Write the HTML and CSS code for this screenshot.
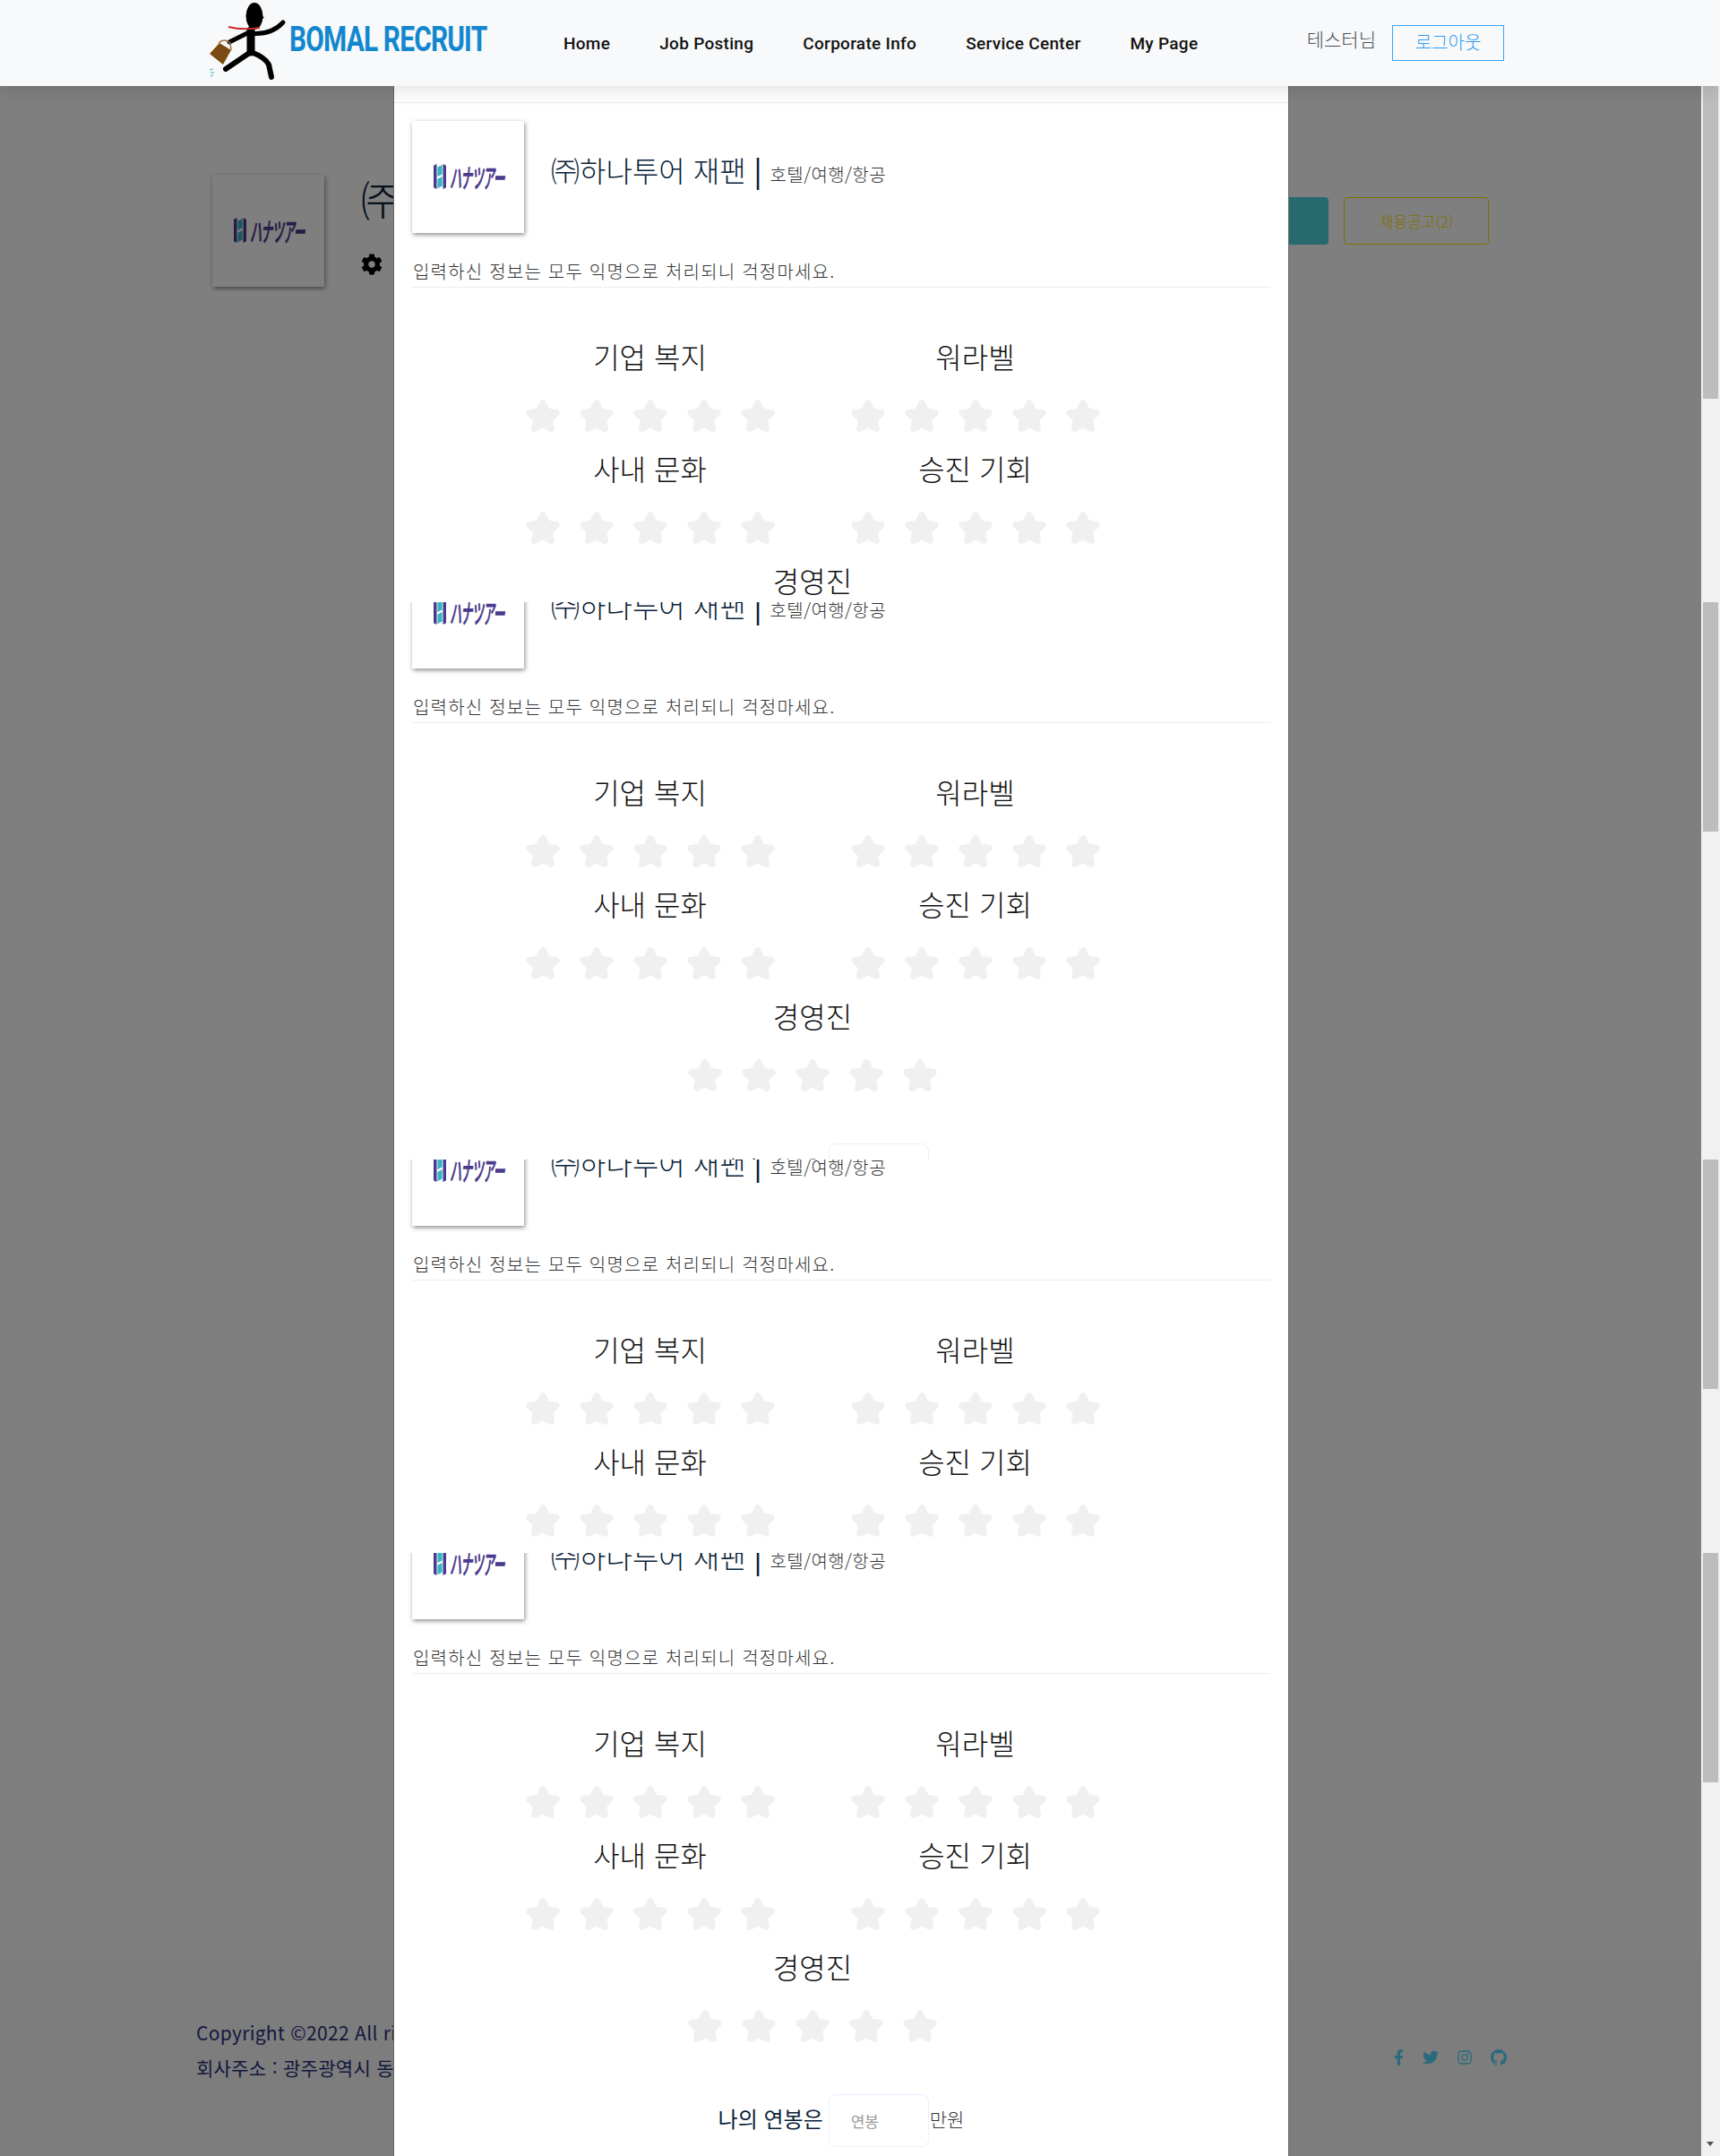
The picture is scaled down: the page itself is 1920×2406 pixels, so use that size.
FILE: index.html
```html
<!DOCTYPE html>
<html lang="ko">
<head>
    <meta charset="UTF-8">
    <meta name="viewport" content="width=device-width, initial-scale=1.0">
    <title>BOMAL RECRUIT</title>
    <link rel="stylesheet" href="styles.css">
</head>
<body>
<svg class="defs" width="0" height="0">
    <symbol id="star" viewBox="-24 -24 624 560"><path d="M259.3 17.8L194 150.2 47.9 171.5c-26.2 3.8-36.7 36.1-17.7 54.6l105.7 103-25 145.5c-4.5 26.3 23.2 46 46.4 33.7L288 439.6l130.7 68.7c23.2 12.2 50.9-7.4 46.4-33.7l-25-145.5 105.7-103c19-18.5 8.5-50.8-17.7-54.6L382 150.2 316.7 17.8c-11.7-23.6-45.6-23.9-57.4 0z" stroke="#f0f0f0" stroke-width="48" stroke-linejoin="round"/></symbol>
    <symbol id="stars" viewBox="0 0 280 36">
        <use href="#star" x="0" width="40" height="36"/>
        <use href="#star" x="60" width="40" height="36"/>
        <use href="#star" x="120" width="40" height="36"/>
        <use href="#star" x="180" width="40" height="36"/>
        <use href="#star" x="240" width="40" height="36"/>
    </symbol>
    <symbol id="hana" viewBox="0 0 16 32">
        <path d="M0 2l4-2v32l-4-2zM16 2l-4-2v32l4-2z" fill="#4b3a8c"/>
        <path d="M5 4l6-3v12l-6 3zM5 19l6-3v12l-6 3z" fill="#35b5c4"/>
    </symbol>
</svg>

<header class="topbar">
    <a class="brand" href="#">
        <svg class="brand-man" viewBox="0 0 104 96">
            <ellipse cx="64" cy="18" rx="9.5" ry="15" fill="#000"/>
            <path d="M72 17l3 3-3 1z" fill="#000"/>
            <path d="M60 34L60 58" stroke="#000" stroke-width="9" stroke-linecap="round" fill="none"/>
            <path d="M58 37Q82 40 96 25" stroke="#000" stroke-width="5" stroke-linecap="round" fill="none"/>
            <path d="M58 36L36 47" stroke="#000" stroke-width="5" stroke-linecap="round" fill="none"/>
            <path d="M60 58L32 77" stroke="#000" stroke-width="6" stroke-linecap="round" fill="none"/>
            <path d="M60 58Q76 64 80 72L83 86" stroke="#000" stroke-width="6" stroke-linecap="round" fill="none"/>
            <path d="M35 30Q50 34 70 31" stroke="#c62828" stroke-width="2" fill="none"/>
            <path d="M14 60L25 48 38 56 29 72z" fill="#7b4a12"/>
            <path d="M24 48Q30 42 37 48L38 56" stroke="#a5713a" stroke-width="1.5" fill="none"/>
            <path d="M14 78l4-1M15 81l4 0M15 85l3-1" stroke="#35b5c4" stroke-width="1" fill="none"/>
        </svg>
        <span class="brand-text">BOMAL RECRUIT</span>
    </a>
    <nav class="topnav">
        <a href="#">Home</a>
        <a href="#">Job Posting</a>
        <a href="#">Corporate Info</a>
        <a href="#">Service Center</a>
        <a href="#">My Page</a>
    </nav>
    <div class="user-box">
        <span class="user-name">테스터님</span>
        <a class="btn-logout" href="#">로그아웃</a>
    </div>
</header>

<div class="below">
    <div class="stage">
        <main class="page">
            <section class="company">
                <div class="logo-card">
                    <svg class="hana-icon"><use href="#hana"/></svg><span class="hana-text">ハナツアー</span>
                </div>
                <div class="company-info">
                    <h1 class="company-name">㈜하나투어 재팬</h1>
                    <svg class="gear" viewBox="0 0 512 512"><path d="M487.4 315.7l-42.6-24.6c4.3-23.2 4.3-47 0-70.2l42.6-24.6c4.9-2.8 7.1-8.6 5.5-14-11.1-35.6-30-67.8-54.7-94.6-3.8-4.1-10-5.1-14.8-2.3L380.8 110c-17.9-15.4-38.5-27.3-60.8-35.1V25.8c0-5.6-3.9-10.5-9.4-11.7-36.7-8.2-74.3-7.8-109.2 0-5.5 1.2-9.4 6.1-9.4 11.7V75c-22.2 7.9-42.8 19.8-60.8 35.1L88.7 85.5c-4.9-2.8-11-1.9-14.8 2.3-24.7 26.7-43.6 58.9-54.7 94.6-1.7 5.4.6 11.2 5.5 14L67.3 221c-4.3 23.2-4.3 47 0 70.2l-42.6 24.6c-4.9 2.8-7.1 8.6-5.5 14 11.1 35.6 30 67.8 54.7 94.6 3.8 4.1 10 5.1 14.8 2.3l42.6-24.6c17.9 15.4 38.5 27.3 60.8 35.1v49.2c0 5.6 3.9 10.5 9.4 11.7 36.7 8.2 74.3 7.8 109.2 0 5.5-1.2 9.4-6.1 9.4-11.7v-49.2c22.2-7.9 42.8-19.8 60.8-35.1l42.6 24.6c4.9 2.8 11 1.9 14.8-2.3 24.7-26.7 43.6-58.9 54.7-94.6 1.5-5.5-.7-11.3-5.6-14.1zM256 336c-44.1 0-80-35.9-80-80s35.9-80 80-80 80 35.9 80 80-35.9 80-80 80z"/></svg>
                </div>
                <div class="company-btns">
                    <a class="btn-teal" href="#">기업 리뷰</a>
                    <a class="btn-yellow" href="#">채용공고(2)</a>
                </div>
            </section>
            <footer class="footer">
                <div class="footer-text">
                    <p>Copyright ©2022 All rights reserved</p>
                    <p>회사주소 : 광주광역시 동구</p>
                </div>
                <div class="socials">
                    <svg class="social-f" viewBox="0 0 320 512"><path d="M279.14 288l14.22-92.66h-88.91v-60.13c0-25.35 12.42-50.06 52.24-50.06h40.42V6.26S260.43 0 225.36 0c-73.22 0-121.08 44.38-121.08 124.72v70.62H22.89V288h81.39v224h100.17V288z"/></svg>
                    <svg class="social-t" viewBox="0 0 512 512"><path d="M459.37 151.716c.325 4.548.325 9.097.325 13.645 0 138.72-105.583 298.558-298.558 298.558-59.452 0-114.68-17.219-161.137-47.106 8.447.974 16.568 1.299 25.34 1.299 49.055 0 94.213-16.568 130.274-44.832-46.132-.975-84.792-31.188-98.112-72.772 6.498.974 12.995 1.624 19.818 1.624 9.421 0 18.843-1.3 27.614-3.573-48.081-9.747-84.143-51.98-84.143-102.985v-1.299c13.969 7.797 30.214 12.67 47.431 13.319-28.264-18.843-46.781-51.005-46.781-87.391 0-19.492 5.197-37.36 14.294-52.954 51.655 63.675 129.3 105.258 216.365 109.807-1.624-7.797-2.599-15.918-2.599-24.04 0-57.828 46.782-104.934 104.934-104.934 30.213 0 57.502 12.67 76.67 33.137 23.715-4.548 46.456-13.32 66.599-25.34-7.798 24.366-24.366 44.833-46.132 57.827 21.117-2.273 41.584-8.122 60.426-16.243-14.292 20.791-32.161 39.308-52.628 54.253z"/></svg>
                    <svg class="social-i" viewBox="0 0 16 16"><rect x="1" y="1" width="14" height="14" rx="3.5" fill="none" stroke-width="1.3"/><circle cx="8" cy="8" r="3.2" fill="none" stroke-width="1.3"/><circle cx="12" cy="4" r=".9"/></svg>
                    <svg class="social-g" viewBox="0 0 16 16"><path d="M8 0C3.58 0 0 3.58 0 8c0 3.54 2.29 6.53 5.47 7.59.4.07.55-.17.55-.38 0-.19-.01-.82-.01-1.49-2.01.37-2.53-.49-2.69-.94-.09-.23-.48-.94-.82-1.13-.28-.15-.68-.52-.01-.53.63-.01 1.08.58 1.23.82.72 1.21 1.87.87 2.33.66.07-.52.28-.87.51-1.07-1.78-.2-3.64-.89-3.64-3.95 0-.87.31-1.59.82-2.15-.08-.2-.36-1.02.08-2.12 0 0 .67-.21 2.2.82.64-.18 1.32-.27 2-.27.68 0 1.36.09 2 .27 1.53-1.04 2.2-.82 2.2-.82.44 1.1.16 1.92.08 2.12.51.56.82 1.27.82 2.15 0 3.07-1.87 3.75-3.65 3.95.29.25.54.73.54 1.48 0 1.07-.01 1.93-.01 2.2 0 .21.15.46.55.38A8.013 8.013 0 0016 8c0-4.42-3.58-8-8-8z"/></svg>
                </div>
            </footer>
        </main>
        <div class="backdrop"></div>

        <div class="modal">
            <!-- first slice, from the top of the modal -->
            <div class="slice slice-one">
                <div class="modal-head"></div>
                <div class="review">
                    <div class="review-top">
                        <div class="logo-card"><svg class="hana-icon"><use href="#hana"/></svg><span class="hana-text">ハナツアー</span></div>
                        <h3 class="review-name">㈜하나투어 재팬 <b>|</b> <small>호텔/여행/항공</small></h3>
                    </div>
                    <p class="review-note">입력하신 정보는 모두 익명으로 처리되니 걱정마세요.</p>
                    <div class="rating-grid">
                        <div class="rating"><h4>기업 복지</h4><svg class="stars"><use href="#stars"/></svg></div>
                        <div class="rating"><h4>워라벨</h4><svg class="stars"><use href="#stars"/></svg></div>
                        <div class="rating"><h4>사내 문화</h4><svg class="stars"><use href="#stars"/></svg></div>
                        <div class="rating"><h4>승진 기회</h4><svg class="stars"><use href="#stars"/></svg></div>
                        <div class="rating rating-wide"><h4>경영진</h4></div>
                    </div>
                </div>
            </div>

            <div class="slice slice-two">
                <div class="review">
                    <div class="review-top">
                        <div class="logo-card"><svg class="hana-icon"><use href="#hana"/></svg><span class="hana-text">ハナツアー</span></div>
                        <h3 class="review-name">㈜하나투어 재팬 <b>|</b> <small>호텔/여행/항공</small></h3>
                    </div>
                    <p class="review-note">입력하신 정보는 모두 익명으로 처리되니 걱정마세요.</p>
                    <div class="rating-grid">
                        <div class="rating"><h4>기업 복지</h4><svg class="stars"><use href="#stars"/></svg></div>
                        <div class="rating"><h4>워라벨</h4><svg class="stars"><use href="#stars"/></svg></div>
                        <div class="rating"><h4>사내 문화</h4><svg class="stars"><use href="#stars"/></svg></div>
                        <div class="rating"><h4>승진 기회</h4><svg class="stars"><use href="#stars"/></svg></div>
                        <div class="rating rating-wide"><h4>경영진</h4><svg class="stars"><use href="#stars"/></svg></div>
                    </div>
                    <div class="salary"><span class="salary-label">나의 연봉은</span><input class="salary-input" type="text" placeholder="연봉"><span class="salary-unit">만원</span></div>
                </div>
            </div>

            <div class="slice slice-three">
                <div class="review">
                    <div class="review-top">
                        <div class="logo-card"><svg class="hana-icon"><use href="#hana"/></svg><span class="hana-text">ハナツアー</span></div>
                        <h3 class="review-name">㈜하나투어 재팬 <b>|</b> <small>호텔/여행/항공</small></h3>
                    </div>
                    <p class="review-note">입력하신 정보는 모두 익명으로 처리되니 걱정마세요.</p>
                    <div class="rating-grid">
                        <div class="rating"><h4>기업 복지</h4><svg class="stars"><use href="#stars"/></svg></div>
                        <div class="rating"><h4>워라벨</h4><svg class="stars"><use href="#stars"/></svg></div>
                        <div class="rating"><h4>사내 문화</h4><svg class="stars"><use href="#stars"/></svg></div>
                        <div class="rating"><h4>승진 기회</h4><svg class="stars"><use href="#stars"/></svg></div>
                    </div>
                </div>
            </div>

            <div class="slice slice-four">
                <div class="review">
                    <div class="review-top">
                        <div class="logo-card"><svg class="hana-icon"><use href="#hana"/></svg><span class="hana-text">ハナツアー</span></div>
                        <h3 class="review-name">㈜하나투어 재팬 <b>|</b> <small>호텔/여행/항공</small></h3>
                    </div>
                    <p class="review-note">입력하신 정보는 모두 익명으로 처리되니 걱정마세요.</p>
                    <div class="rating-grid">
                        <div class="rating"><h4>기업 복지</h4><svg class="stars"><use href="#stars"/></svg></div>
                        <div class="rating"><h4>워라벨</h4><svg class="stars"><use href="#stars"/></svg></div>
                        <div class="rating"><h4>사내 문화</h4><svg class="stars"><use href="#stars"/></svg></div>
                        <div class="rating"><h4>승진 기회</h4><svg class="stars"><use href="#stars"/></svg></div>
                        <div class="rating rating-wide"><h4>경영진</h4><svg class="stars"><use href="#stars"/></svg></div>
                    </div>
                    <div class="salary"><span class="salary-label">나의 연봉은</span><input class="salary-input" type="text" placeholder="연봉"><span class="salary-unit">만원</span></div>
                </div>
            </div>
        </div>
    </div>

    <div class="scrollbar">
        <div class="thumb thumb-one"></div>
        <div class="thumb thumb-two"></div>
        <div class="thumb thumb-three"></div>
        <div class="thumb thumb-four"></div>
        <div class="scroll-arrow"></div>
    </div>
</div>
</body>
</html>
```

FILE: styles.css
```css
* {
    box-sizing: border-box;
}
html, body {
    margin: 0;
    padding: 0;
}
body {
    width: 1920px;
    height: 2406px;
    overflow: hidden;
    font-family: "Noto Sans CJK KR", "Noto Sans", sans-serif;
    font-weight: 300;
    background-color: #ffffff;
    color: #212529;
}
a {
    text-decoration: none;
}
.defs {
    position: absolute;
}

/* top bar */
.topbar {
    position: relative;
    z-index: 10;
    display: flex;
    align-items: flex-start;
    height: 96px;
    padding: 0 241px 0 220px;
    background-color: #f8f9fa;
    box-shadow: 0 0 24px rgba(0,0,0,0.16);
}
.brand {
    display: flex;
    width: 325px;
}
.brand-man {
    flex: none;
    width: 104px;
    height: 96px;
}
.brand-text {
    flex: none;
    margin-top: 19px;
    margin-left: -1px;
    font-family: "Roboto", sans-serif;
    font-size: 38px;
    line-height: 50px;
    font-weight: 700;
    letter-spacing: -1px;
    color: #1287cf;
    transform: scaleX(0.785);
    transform-origin: left center;
}
.topnav {
    display: flex;
    gap: 55px;
    margin-left: 84px;
    margin-top: 36px;
}
.topnav a {
    font-family: "Roboto", sans-serif;
    font-size: 19px;
    line-height: 26px;
    font-weight: 500;
    letter-spacing: 0.3px;
    color: #111111;
    white-space: nowrap;
}
.user-box {
    display: flex;
    align-items: flex-start;
    margin-left: auto;
    padding-top: 28px;
}
.user-name {
    margin-right: 18px;
    font-size: 21px;
    line-height: 30px;
    color: #495057;
}
.btn-logout {
    width: 125px;
    height: 40px;
    border: 1px solid #38a4ff;
    font-size: 20px;
    line-height: 36px;
    text-align: center;
    color: #339af0;
}

.below {
    display: flex;
    height: 2310px;
}
.stage {
    position: relative;
    flex: none;
    width: 1899px;
    height: 100%;
}

/* page behind the modal */
.page {
    display: flex;
    flex-direction: column;
    height: 100%;
}
.company {
    display: flex;
    padding: 99px 237px 0 237px;
}
.logo-card {
    flex: none;
    display: flex;
    align-items: center;
    width: 125px;
    height: 125px;
    padding-left: 24px;
    background-color: #ffffff;
    box-shadow: 1px 2px 5px rgba(0,0,0,0.45);
    overflow: hidden;
}
.hana-icon {
    flex: none;
    width: 14px;
    height: 32px;
    margin-bottom: 2px;
}
.hana-text {
    flex: none;
    margin: 0 0 2px 4px;
    font-family: "Noto Sans CJK JP", sans-serif;
    font-size: 30px;
    line-height: 36px;
    font-style: italic;
    font-weight: 700;
    letter-spacing: -2px;
    white-space: nowrap;
    color: #4b3a8c;
    transform: scaleX(0.44);
    transform-origin: left center;
}
.company-info {
    margin-left: 41px;
}
.company-name {
    margin: -7px 0 0 0;
    font-size: 48px;
    line-height: 66px;
    font-weight: 300;
    color: #0b1f3a;
}
.gear {
    display: block;
    width: 24px;
    height: 24px;
    margin-top: 29px;
    fill: #000000;
}
.company-btns {
    display: flex;
    gap: 17px;
    margin-left: auto;
    padding-top: 25px;
}
.btn-teal,
.btn-yellow {
    width: 162px;
    height: 53px;
    border-radius: 4px;
    font-size: 17px;
    line-height: 51px;
    text-align: center;
}
.btn-teal {
    padding-top: 1px;
    background-color: #4cd4e0;
    color: #ffffff;
}
.btn-yellow {
    border: 1px solid #ffe000;
    color: #ffe000;
}

.footer {
    display: flex;
    align-items: flex-start;
    justify-content: space-between;
    height: 221px;
    margin-top: auto;
    padding: 68px 237px 0 219px;
    background-color: #f9fbf9;
}
.footer-text p {
    margin: 0 0 9px 0;
    font-size: 21px;
    line-height: 30px;
    letter-spacing: 0.3px;
    font-weight: 400;
    color: #2a2f7e;
}
.socials {
    display: flex;
    align-items: center;
    gap: 21px;
    margin-top: 34px;
    margin-right: -20px;
    fill: #56d4fa;
    stroke: #56d4fa;
}
.socials svg {
    display: block;
    height: 18px;
    stroke-width: 0;
}
.social-f {
    width: 11px;
}
.social-t {
    width: 18px;
}
.social-i {
    width: 16px;
}
.social-i rect,
.social-i circle {
    stroke-width: 1.3;
}
.social-i circle:last-child {
    stroke: none;
}
.social-g {
    width: 18px;
}

.backdrop {
    position: absolute;
    inset: 0;
    background-color: rgba(0,0,0,0.5);
}

/* review modal, scrolled into four slices */
.modal {
    position: absolute;
    top: 0;
    left: 439px;
    width: 1000px;
    height: 100%;
    overflow: hidden;
    border-left: 1px solid #666666;
    border-right: 1px solid #666666;
    background-color: #ffffff;
}
.slice {
    overflow: hidden;
}
.slice-one {
    height: 576px;
}
.slice-two {
    height: 622px;
}
.slice-three {
    height: 439px;
}
.slice-four {
    height: 673px;
}
.slice-two .review,
.slice-three .review,
.slice-four .review {
    margin-top: -71px;
}
.slice .review {
    background-color: #ffffff;
}
.modal-head {
    height: 19px;
    border-bottom: 1px solid #e9ecef;
}
.review {
    padding: 20px 20px 0 20px;
}
.review-top {
    display: flex;
    align-items: flex-start;
    gap: 30px;
}
.review-name {
    margin: 32px 0 3px 0;
    font-size: 32px;
    line-height: 44px;
    font-weight: 300;
    white-space: nowrap;
    color: #0b1f3a;
}
.review-name b {
    font-weight: 500;
}
.review-name small {
    font-size: 20px;
    letter-spacing: 0.4px;
    color: #333333;
}
.review-note {
    margin: 28px 0 0 0;
    padding: 0 0 2px 1px;
    border-bottom: 1px solid #e9ecef;
    font-size: 20px;
    line-height: 30px;
    letter-spacing: 1.2px;
    color: #333333;
}
.rating-grid {
    display: grid;
    grid-template-columns: 363px 363px;
    width: 726px;
    margin: 55px 0 0 84px;
}
.rating {
    height: 125px;
    text-align: center;
}
.rating-wide {
    grid-column: 1 / 3;
}
.rating h4 {
    margin: -3px 0 0 0;
    font-size: 32px;
    line-height: 48px;
    font-weight: 300;
    color: #111111;
}
.stars {
    display: block;
    width: 280px;
    height: 36px;
    margin: 25px auto 0 auto;
    fill: #f0f0f0;
}
.salary {
    display: flex;
    align-items: center;
    justify-content: center;
    margin-top: 39px;
}
.salary-label {
    padding-bottom: 6px;
    font-size: 24px;
    line-height: 32px;
    font-weight: 400;
    color: #0b1f3a;
}
.salary-input {
    width: 112px;
    height: 59px;
    margin: 0 1px 0 6px;
    padding: 0 24px;
    border: 1px solid #eeeeff;
    border-radius: 8px;
    font-family: inherit;
    font-size: 17px;
    outline: none;
}
.salary-input::placeholder {
    color: #999999;
}
.salary-unit {
    padding-bottom: 6px;
    font-size: 21px;
    line-height: 30px;
    color: #333333;
}

/* window scrollbar */
.scrollbar {
    position: relative;
    z-index: 5;
    flex: none;
    width: 21px;
    height: 100%;
    padding: 0 2px;
    background-color: #f1f1f1;
}
.thumb {
    background-color: #bdbdbd;
}
.thumb-one {
    height: 349px;
}
.thumb-two {
    height: 256px;
    margin-top: 227px;
}
.thumb-three {
    height: 256px;
    margin-top: 366px;
}
.thumb-four {
    height: 256px;
    margin-top: 183px;
}
.scroll-arrow {
    width: 0;
    height: 0;
    margin: 401px 0 0 4px;
    border-left: 4.5px solid transparent;
    border-right: 4.5px solid transparent;
    border-top: 5px solid #505050;
}
```
